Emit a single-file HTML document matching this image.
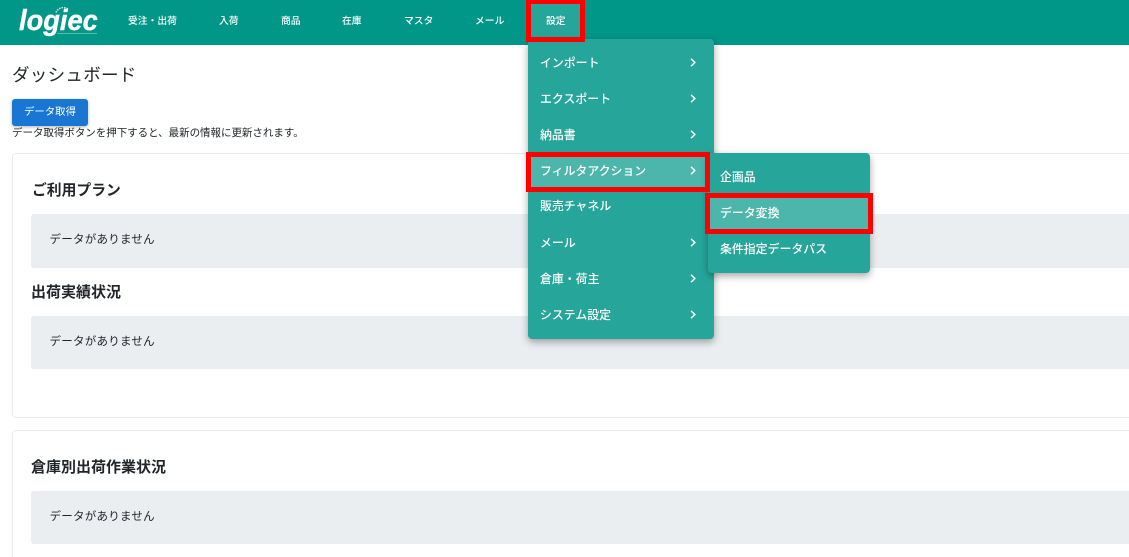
<!DOCTYPE html>
<html lang="ja"><head><meta charset="utf-8"><title>ダッシュボード</title>
<style>
*{box-sizing:border-box}
html,body{margin:0;padding:0;width:1129px;height:557px;overflow:hidden;background:#fff}
body{position:relative;font-family:"Liberation Sans","Noto Sans CJK JP",sans-serif;color:#212529}
.a{position:absolute;white-space:nowrap}
.nav{left:0;top:0;width:1129px;height:45px;background:#009688}
.n{top:15px;font-size:9.8px;line-height:14px;color:#fff;font-weight:500}
.card{left:12px;width:1130px;border:1px solid #ebebeb;border-radius:4px;background:#fff}
.al{left:31px;width:1110px;background:#ebeef1;border-radius:3px}
.al span{position:absolute;left:18.5px;font-size:11.5px;line-height:16px;color:#212529;letter-spacing:.25px}
.h{left:31px;font-size:15px;line-height:20px;font-weight:700;color:#212529}
.menu{background:#26a69a;border-radius:4px;box-shadow:0 3px 8px rgba(0,0,0,.35)}
.m{font-size:11.9px;line-height:16px;color:#fff;font-weight:500}
.hl{background:#4db6ac}
.red{border:5px solid #f00}
svg{position:absolute;overflow:visible}
</style></head><body>
<div class="a nav"></div>
<div class="a" style="left:19px;top:4px;font:italic 700 29px/34px 'Liberation Sans',sans-serif;color:#fff;-webkit-text-stroke:.4px #fff;transform:scaleX(.94);transform-origin:left">logiec</div>
<svg style="left:54px;top:6px" width="18" height="8" viewBox="0 0 18 8"><path d="M2 6.5A8 8 0 0 1 14 3" fill="none" stroke="#cdeae6" stroke-width="1.4" stroke-dasharray="1.5 1"/></svg>
<div class="a" style="left:57px;top:33px;width:40px;height:1px;background:rgba(255,255,255,.35)"></div>

<div class="a n" style="left:128px">受注・出荷</div>
<div class="a n" style="left:219px">入荷</div>
<div class="a n" style="left:281px">商品</div>
<div class="a n" style="left:342px">在庫</div>
<div class="a n" style="left:404px">マスタ</div>
<div class="a n" style="left:475px">メール</div>
<div class="a" style="left:531px;top:4px;width:49px;height:33px;background:#26a69a"></div>
<div class="a n" style="left:546px">設定</div>

<div class="a" style="left:12px;top:63px;font-size:17.5px;line-height:24px;letter-spacing:.3px;color:#212529">ダッシュボード</div>
<div class="a" style="left:12px;top:99px;width:76px;height:27px;background:#1976d2;border-radius:3px;box-shadow:0 1px 3px rgba(0,0,0,.3);color:#fff;font-size:10.4px;line-height:28px;text-align:center">データ取得</div>
<div class="a" style="left:12px;top:126px;font-size:10.5px;line-height:15px;color:#212529;letter-spacing:-.03px">データ取得ボタンを押下すると、最新の情報に更新されます。</div>

<div class="a card" style="top:153px;height:265px"></div>
<div class="a h" style="top:181px;left:32px;font-size:14.8px">ご利用プラン</div>
<div class="a al" style="top:214px;height:54px"><span style="top:18px">データがありません</span></div>
<div class="a h" style="top:283px">出荷実績状況</div>
<div class="a al" style="top:316px;height:53px"><span style="top:18px">データがありません</span></div>

<div class="a card" style="top:430px;height:140px"></div>
<div class="a h" style="top:458px">倉庫別出荷作業状況</div>
<div class="a al" style="top:491px;height:53px"><span style="top:18px">データがありません</span></div>

<div class="a menu" style="left:528px;top:39px;width:186px;height:300px"></div>
<div class="a hl" style="left:531px;top:157px;width:174px;height:30px"></div>
<div class="a m" style="left:540px;top:55px">インポート</div>
<div class="a m" style="left:540px;top:91px">エクスポート</div>
<div class="a m" style="left:540px;top:127px">納品書</div>
<div class="a m" style="left:540px;top:163px">フィルタアクション</div>
<div class="a m" style="left:540px;top:198px">販売チャネル</div>
<div class="a m" style="left:540px;top:235px">メール</div>
<div class="a m" style="left:540px;top:271px">倉庫・荷主</div>
<div class="a m" style="left:540px;top:307px">システム設定</div>
<svg style="left:690px;top:58px" width="6" height="9" viewBox="0 0 6 9"><path d="M1 .8L4.8 4.5 1 8.2" fill="none" stroke="#fff" stroke-width="1.5"/></svg>
<svg style="left:690px;top:94px" width="6" height="9" viewBox="0 0 6 9"><path d="M1 .8L4.8 4.5 1 8.2" fill="none" stroke="#fff" stroke-width="1.5"/></svg>
<svg style="left:690px;top:130px" width="6" height="9" viewBox="0 0 6 9"><path d="M1 .8L4.8 4.5 1 8.2" fill="none" stroke="#fff" stroke-width="1.5"/></svg>
<svg style="left:690px;top:166px" width="6" height="9" viewBox="0 0 6 9"><path d="M1 .8L4.8 4.5 1 8.2" fill="none" stroke="#fff" stroke-width="1.5"/></svg>
<svg style="left:690px;top:238px" width="6" height="9" viewBox="0 0 6 9"><path d="M1 .8L4.8 4.5 1 8.2" fill="none" stroke="#fff" stroke-width="1.5"/></svg>
<svg style="left:690px;top:274px" width="6" height="9" viewBox="0 0 6 9"><path d="M1 .8L4.8 4.5 1 8.2" fill="none" stroke="#fff" stroke-width="1.5"/></svg>
<svg style="left:690px;top:310px" width="6" height="9" viewBox="0 0 6 9"><path d="M1 .8L4.8 4.5 1 8.2" fill="none" stroke="#fff" stroke-width="1.5"/></svg>

<div class="a menu" style="left:708px;top:153px;width:162px;height:120px"></div>
<div class="a hl" style="left:710px;top:198px;width:158px;height:31px"></div>
<div class="a m" style="left:720px;top:169px">企画品</div>
<div class="a m" style="left:720px;top:205px">データ変換</div>
<div class="a m" style="left:720px;top:241px">条件指定データパス</div>

<div class="a red" style="left:526px;top:-1px;width:59px;height:43px"></div>
<div class="a red" style="left:526px;top:152px;width:184px;height:40px"></div>
<div class="a red" style="left:705px;top:193px;width:168px;height:41px"></div>
</body></html>
